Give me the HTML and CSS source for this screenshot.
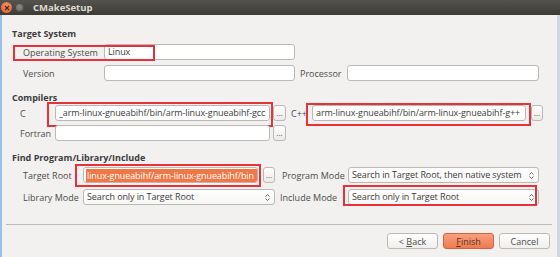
FILE: index.html
```html
<!DOCTYPE html>
<html lang="en">
<head>
  <meta charset="UTF-8" />
  <title>CMakeSetup</title>
  <link rel="stylesheet" href="styles.css">
</head>
<body>
  <div class="titlebar">
    <span class="btn-close"><svg width="6" height="6" viewBox="0 0 6 6"><path d="M1 1L5 5M5 1L1 5" stroke="#4a2a1c" stroke-width="1.2"/></svg></span>
    <span class="btn-min"></span>
    <span class="title">CMakeSetup</span>
  </div>

  <div class="window">
    <div class="content">
      <h3 class="group-title first">Target System</h3>
      <div class="row sys-row">
        <span class="label">Operating System</span>
        <div class="field"><span>Linux</span></div>
        <span class="mark mark-os"></span>
      </div>
      <div class="row sys-row">
        <span class="label">Version</span>
        <div class="field"></div>
        <span class="label label-proc">Processor</span>
        <div class="field"></div>
      </div>

      <h3 class="group-title">Compilers</h3>
      <div class="row comp-row">
        <span class="label">C</span>
        <div class="field"><span>_arm-linux-gnueabihf/bin/arm-linux-gnueabihf-gcc</span></div>
        <button class="dots">...</button>
        <span class="label label-cpp">C++</span>
        <div class="field"><span>arm-linux-gnueabihf/bin/arm-linux-gnueabihf-g++</span></div>
        <button class="dots">...</button>
        <span class="mark mark-c"></span>
        <span class="mark mark-cpp"></span>
      </div>
      <div class="row comp-row">
        <span class="label">Fortran</span>
        <div class="field"></div>
        <button class="dots">...</button>
      </div>

      <h3 class="group-title">Find Program/Library/Include</h3>
      <div class="row find-row">
        <span class="label">Target Root</span>
        <div class="field selected"><span>linux-gnueabihf/arm-linux-gnueabihf/bin</span></div>
        <button class="dots">...</button>
        <span class="label label-mode">Program Mode</span>
        <div class="combo"><span>Search in Target Root, then native system</span>
          <svg width="5" height="9" viewBox="0 0 5 9"><path d="M0.5 3.5L2.5 1.5L4.5 3.5M0.5 5.5L2.5 7.5L4.5 5.5" fill="none" stroke="#555" stroke-width="0.9"/></svg>
        </div>
        <span class="mark mark-root"></span>
      </div>
      <div class="row find-row">
        <span class="label">Library Mode</span>
        <div class="combo wide"><span>Search only in Target Root</span>
          <svg width="5" height="9" viewBox="0 0 5 9"><path d="M0.5 3.5L2.5 1.5L4.5 3.5M0.5 5.5L2.5 7.5L4.5 5.5" fill="none" stroke="#555" stroke-width="0.9"/></svg>
        </div>
        <span class="label label-mode label-inc">Include Mode</span>
        <div class="combo"><span>Search only in Target Root</span>
          <svg width="5" height="9" viewBox="0 0 5 9"><path d="M0.5 3.5L2.5 1.5L4.5 3.5M0.5 5.5L2.5 7.5L4.5 5.5" fill="none" stroke="#555" stroke-width="0.9"/></svg>
        </div>
        <span class="mark mark-inc"></span>
      </div>

      <div class="separator"></div>

      <div class="buttons">
        <button class="push">&lt; <u>B</u>ack</button>
        <button class="push default"><u>F</u>inish</button>
        <button class="push">Cancel</button>
      </div>
    </div>
  </div>
</body>
</html>
```

FILE: styles.css
```css
html, body {
  margin: 0;
  height: 257px;
  overflow: hidden;
}
body {
  width: 560px;
  font-family: "Open Sans", "DejaVu Sans", sans-serif;
  font-size: 9px;
  color: #4c4c4c;
  background-color: #f2f1f0;
}
.titlebar {
  height: 15px;
  display: flex;
  align-items: center;
  background: linear-gradient(#55534e, #3c3b37);
}
.btn-close {
  width: 11px;
  height: 11px;
  margin-left: 1px;
  border-radius: 50%;
  background: radial-gradient(circle at 50% 35%, #f6906a, #e2582a);
  display: flex;
  align-items: center;
  justify-content: center;
}
.btn-min {
  width: 9px;
  height: 9px;
  margin-left: 3px;
  border-radius: 50%;
  background: radial-gradient(circle at 50% 40%, #8d8a85, #5f5d58);
  box-shadow: inset 0 0 0 1px #4a4844;
}
.title {
  margin-left: 9px;
  color: #dfdbd2;
  font-weight: bold;
  font-size: 9.5px;
}
.window {
  height: 242px;
  overflow: hidden;
  border-left: 2px solid #98c1ea;
  border-right: 3px solid #cfd8e2;
}
.content {
  padding: 0 3px 0 10px;
}
.group-title {
  margin: 11px 0 0 0;
  height: 12px;
  line-height: 12px;
  font-size: 9px;
  font-weight: bold;
  color: #3c3c3c;
}
.group-title.first {
  margin-top: 13px;
}
.row {
  position: relative;
  display: grid;
  align-items: center;
  height: 16px;
}
.label {
  white-space: nowrap;
}
.field,
.combo {
  height: 14px;
  border: 1px solid #bcb9b4;
  border-radius: 3px;
  background-color: #fff;
  overflow: hidden;
  white-space: nowrap;
  line-height: 14px;
  color: #3c3c3c;
}
.field span,
.combo span {
  padding-left: 3px;
  letter-spacing: -0.1px;
}
.field.selected span {
  display: block;
  margin: 1px 0 0 2px;
  padding: 0 1px;
  height: 13px;
  line-height: 13px;
  background-color: #f07746;
  color: #fff;
}
.combo {
  display: flex;
  justify-content: space-between;
  align-items: center;
  background: linear-gradient(#ffffff, #f7f7f6);
}
.combo svg {
  margin-right: 4px;
}

/* Target System */
.sys-row {
  margin-top: 4px;
  padding-left: 11px;
  grid-template-columns: 81px 191px 5px 47px 192px;
}
.sys-row + .sys-row {
  margin-top: 5px;
}
.label-proc {
  grid-column: 4;
}

/* Compilers */
.comp-row {
  margin-top: 1px;
  padding-left: 8px;
  grid-template-columns: 35px 215px 3px 13px 5px 21px 214px 5px 12px;
}
.comp-row + .comp-row {
  margin-top: 4px;
}
.comp-row .dots:nth-of-type(1) {
  grid-column: 4;
}
.label-cpp {
  grid-column: 6;
}
.comp-row .dots:nth-of-type(2) {
  grid-column: 9;
}

/* Find Program/Library/Include */
.find-row {
  margin-top: 3px;
  padding-left: 11px;
  grid-template-columns: 60px 175px 5px 12px 7px 66px 191px;
}
.find-row + .find-row {
  margin-top: 6px;
}
.find-row .dots {
  grid-column: 4;
}
.label-mode {
  grid-column: 6;
}
.label-inc {
  margin-left: -2px;
}
.combo.wide {
  grid-column: 2 / 5;
}

.dots {
  height: 16px;
  padding: 0;
  border: 1px solid #bcb9b4;
  border-radius: 3px;
  background: linear-gradient(#fdfdfc, #ecebe9);
  font-family: inherit;
  font-size: 8px;
  line-height: 10px;
  color: #4c4c4c;
}

/* annotation boxes */
.mark {
  position: absolute;
  border: 2px solid #e5323b;
  pointer-events: none;
}
.mark-os { left: 1px; top: 1px; width: 138px; height: 12px; }
.mark-c { left: 35px; top: -3px; width: 222px; height: 21px; }
.mark-cpp { left: 294px; top: -2px; width: 221px; height: 19px; }
.mark-root { left: 63px; top: -3px; width: 182px; height: 19px; }
.mark-inc { left: 331px; top: -4px; width: 190px; height: 17px; }

.separator {
  margin: 19px 2px 0 -6px;
  height: 1px;
  background-color: #bdbab5;
}
.buttons {
  margin-top: 8px;
  display: flex;
  justify-content: flex-end;
  gap: 5px;
  padding-right: 4px;
}
.push {
  width: 51px;
  height: 16px;
  padding: 0;
  border: 1px solid #bcb9b4;
  border-radius: 3px;
  background: linear-gradient(#ffffff, #efeeec);
  font-family: inherit;
  font-size: 9px;
  color: #4c4c4c;
}
.push.default {
  border-color: #d9633a;
  background: linear-gradient(#f7a07f, #ec7a50);
  color: #5a3326;
}
```
